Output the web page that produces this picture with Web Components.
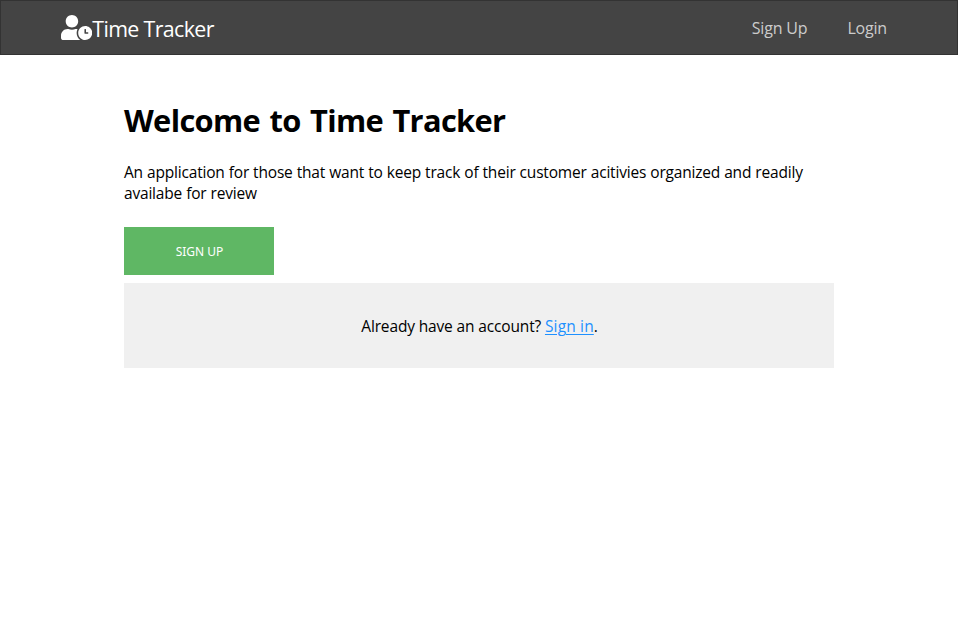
<!DOCTYPE html>
<html lang="en">
<head>
<meta charset="utf-8">
<title>Time Tracker</title>
<style>
body { margin: 0; background: #fff; color: #000; font-family: "Open Sans", "Noto Sans", sans-serif; }
</style>
</head>
<body>
<app-nav>
  <app-brand slot="brand">Time Tracker</app-brand>
  <nav-link style="--track:-.16px">Sign Up</nav-link>
  <nav-link style="--track:-.2px">Login</nav-link>
</app-nav>
<welcome-panel>
  <span slot="title">Welcome to Time Tracker</span>
  <span slot="intro">An application for those that want to keep track of their customer acitivies organized and readily availabe for review</span>
  <action-button slot="action">SIGN UP</action-button>
  <account-prompt slot="footer" label="Sign in">Already have an account?</account-prompt>
</welcome-panel>
<script>
function define(name, html, setup) {
  const template = document.createElement('template');
  template.innerHTML = html;
  customElements.define(name, class extends HTMLElement {
    constructor() {
      super();
      this.attachShadow({ mode: 'open' }).append(template.content.cloneNode(true));
    }
    connectedCallback() { if (setup) setup(this); }
  });
}

define('app-nav', `
<style>
:host { display: block; }
nav { box-sizing: border-box; height: 55px; display: flex; align-items: center; justify-content: space-between; background: #444; border: 1px solid #333; padding: 0 70px 0 60px; }
.links { display: flex; gap: 40px; }
</style>
<nav><slot name="brand"></slot><div class="links"><slot></slot></div></nav>`);

define('app-brand', `
<style>
:host { display: flex; align-items: center; color: #fff; font-size: 21.4px; line-height: 28px; letter-spacing: -.64px; }
svg { display: block; width: 31.25px; height: 25px; }
span { padding-top: 2px; }
</style>
<svg viewBox="0 0 640 512" fill="currentColor" aria-hidden="true"><path d="M496 224c-79.6 0-144 64.4-144 144s64.4 144 144 144 144-64.4 144-144-64.4-144-144-144zm64 150.3c0 5.3-4.4 9.7-9.7 9.7h-60.6c-5.3 0-9.7-4.4-9.7-9.7v-76.6c0-5.3 4.4-9.7 9.7-9.7h12.6c5.3 0 9.7 4.4 9.7 9.7V352h38.3c5.3 0 9.7 4.4 9.7 9.7v12.6zM320 368c0-27.8 6.7-54.1 18.2-77.5-8-1.5-16.2-2.5-24.6-2.5h-16.7c-22.2 10.2-46.9 16-72.9 16s-50.6-5.8-72.9-16h-16.7C60.2 288 0 348.2 0 422.4V464c0 26.5 21.5 48 48 48h347.1c-45.3-31.9-75.1-84.5-75.1-144zm-96-112c70.7 0 128-57.3 128-128S294.7 0 224 0 96 57.3 96 128s57.3 128 128 128z"/></svg><span><slot></slot></span>`);

define('nav-link', `
<style>
:host { display: block; }
a { display: block; color: #ccc; font-size: 16px; line-height: 21px; letter-spacing: var(--track); text-decoration: none; padding-top: 2px; }
</style>
<a href="#"><slot></slot></a>`);

define('welcome-panel', `
<style>
:host { display: block; width: 710px; margin: 0 auto; padding-top: 44px; }
h1 { margin: 0; font-size: 30.8px; line-height: 42px; font-weight: 700; letter-spacing: -.65px; word-spacing: 2px; }
p { margin: 21px 0 23px; font-size: 15.5px; line-height: 21px; letter-spacing: -.19px; word-spacing: .25px; }
</style>
<h1><slot name="title"></slot></h1>
<p><slot name="intro"></slot></p>
<slot name="action"></slot>
<slot name="footer"></slot>`);

define('action-button', `
<style>
:host { display: block; }
button { display: block; width: 150px; height: 48px; border: 0; padding: 0 0 0 1px; background: #5fb764; color: #fff; font: 12px "Noto Sans", sans-serif; }
</style>
<button type="button"><slot></slot></button>`);

define('account-prompt', `
<style>
:host { display: block; margin-top: 8px; }
div { box-sizing: border-box; height: 85px; padding: 33px 0 0 1px; background: #f0f0f0; text-align: center; font-size: 15.5px; line-height: 21px; letter-spacing: -.15px; }
a { color: #1e90ff; letter-spacing: .15px; text-decoration: underline; text-decoration-thickness: 1px; text-underline-offset: 2px; }
</style>
<div><slot></slot> <a href="#"></a>.</div>`, el => {
  el.shadowRoot.querySelector('a').textContent = el.getAttribute('label');
});
</script>
</body>
</html>
